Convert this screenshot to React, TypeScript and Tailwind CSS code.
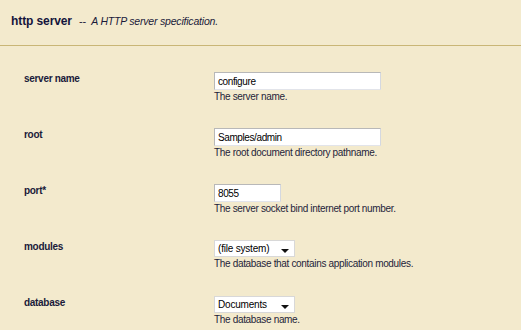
import React from "react";

const rows: { label: string; kind: "input" | "select"; value: string; width: string; desc: string }[] = [
  { label: "server name", kind: "input", value: "configure", width: "w-[167px]", desc: "The server name." },
  { label: "root", kind: "input", value: "Samples/admin", width: "w-[167px]", desc: "The root document directory pathname." },
  { label: "port*", kind: "input", value: "8055", width: "w-[67px]", desc: "The server socket bind internet port number." },
  { label: "modules", kind: "select", value: "(file system)", width: "w-[81px]", desc: "The database that contains application modules." },
  { label: "database", kind: "select", value: "Documents", width: "w-[81px]", desc: "The database name." },
];

export default function App() {
  return (
    <div className="w-[521px] h-[330px] overflow-hidden bg-[#f3eacd] text-[#1a1a3a]" style={{ fontFamily: '"Liberation Sans", Arial, sans-serif' }}>
      <div className="h-[46px] flex items-start pl-[11px] pt-[14px] border-b border-[#c9b676]">
        <span className="font-bold text-[12px] leading-[14px] tracking-[-0.1px] text-[#14143c]">http server</span>
        <span className="text-[11px] leading-[14px] ml-[7px]">--</span>
        <span className="italic text-[10.5px] leading-[14px] ml-[5px] tracking-[-0.2px]">A HTTP server specification.</span>
      </div>
      <div className="flex flex-col pt-[26px]">
        {rows.map((r) => (
          <div key={r.label} className="flex h-[56px]">
            <div className="w-[214px] pl-[24px] pt-[1px] font-bold text-[10px] leading-[12px] tracking-[-0.3px]">{r.label}</div>
            <div className="flex flex-col">
              {r.kind === "input" ? (
                <div className={`${r.width} h-[18px] bg-white border border-t-[#b8b8b8] border-l-[#b8b8b8] border-r-[#d4d8e0] border-b-[#e2e4ea] flex items-center pl-[3px] text-[10px] tracking-[-0.4px] text-black`}>
                  {r.value}
                </div>
              ) : (
                <div className={`${r.width} h-[17px] bg-white border border-[#d8d8d8] flex items-center pl-[3px] pr-[5px] text-[10px] tracking-[-0.2px] text-black`}>
                  <span className="flex-1">{r.value}</span>
                  <svg width="8" height="5" viewBox="0 0 8 5" className="mt-[5px]">
                    <polygon points="0,0 8,0 4,4" fill="#111" />
                  </svg>
                </div>
              )}
              <div className="text-[10px] leading-[12px] mt-[1px] tracking-[-0.33px] text-[#1e1e3a]">{r.desc}</div>
            </div>
          </div>
        ))}
      </div>
    </div>
  );
}
